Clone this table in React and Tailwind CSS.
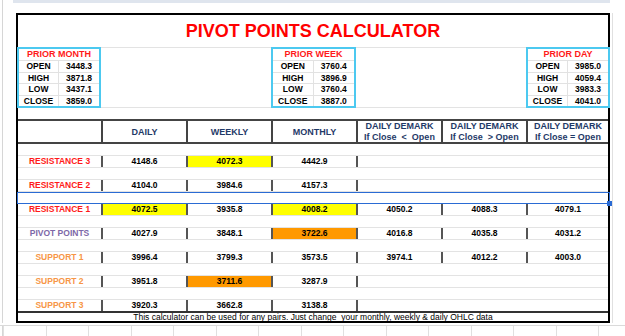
import React from "react";

const priorMonth = [["OPEN", "3448.3"], ["HIGH", "3871.8"], ["LOW", "3437.1"], ["CLOSE", "3859.0"]];
const priorWeek = [["OPEN", "3760.4"], ["HIGH", "3896.9"], ["LOW", "3760.4"], ["CLOSE", "3887.0"]];
const priorDay = [["OPEN", "3985.0"], ["HIGH", "4059.4"], ["LOW", "3983.3"], ["CLOSE", "4041.0"]];

const red = "text-[#ff1a1a]";
const purple = "text-[#7d68a8]";
const orange = "text-[#f79646]";
const yellowBg = "bg-[#ffff00]";
const orangeBg = "bg-[#ff9900]";

// null = empty spacer row, "sel" = the selected empty row
const rows = [
  null,
  { label: "RESISTANCE 3", tone: red, vals: [["4148.6", ""], ["4072.3", yellowBg], ["4442.9", ""]] },
  null,
  { label: "RESISTANCE 2", tone: red, vals: [["4104.0", ""], ["3984.6", ""], ["4157.3", ""]] },
  "sel",
  {
    label: "RESISTANCE 1",
    tone: red,
    vals: [["4072.5", yellowBg], ["3935.8", ""], ["4008.2", yellowBg]],
    demark: ["4050.2", "4088.3", "4079.1"],
  },
  null,
  {
    label: "PIVOT POINTS",
    tone: purple,
    vals: [["4027.9", ""], ["3848.1", ""], ["3722.6", orangeBg]],
    demark: ["4016.8", "4035.8", "4031.2"],
  },
  null,
  {
    label: "SUPPORT 1",
    tone: orange,
    vals: [["3996.4", ""], ["3799.3", ""], ["3573.5", ""]],
    demark: ["3974.1", "4012.2", "4003.0"],
  },
  null,
  { label: "SUPPORT 2", tone: orange, vals: [["3951.8", ""], ["3711.6", orangeBg], ["3287.9", ""]] },
  null,
  { label: "SUPPORT 3", tone: orange, vals: [["3920.3", ""], ["3662.8", ""], ["3138.8", ""]] },
];

const cols = "grid grid-cols-[83px_85px_85px_85px_85px_85px_82px]";

const PriorBox = ({ title, data, className }) => (
  <div className={`h-[61px] -mt-px border-2 border-[#4cc9f0] bg-white flex flex-col ${className}`}>
    <div className={`h-[11px] flex items-center justify-center text-[9px] font-bold leading-none ${red}`}>
      {title}
    </div>
    {data.map(([k, v]) => (
      <div key={k} className="flex-1 flex border-t border-[#e2e2e2] text-[8.5px] font-bold leading-none text-black">
        <div className="w-1/2 flex items-center justify-center border-r border-[#e2e2e2]">{k}</div>
        <div className="w-1/2 flex items-center justify-center">{v}</div>
      </div>
    ))}
  </div>
);

const HeadCell = ({ children }) => (
  <div className="border-l-2 border-[#444] flex flex-col items-center justify-center text-[9px] font-bold leading-[11px] text-[#1f3a68] whitespace-pre">
    {children}
  </div>
);

const DataRow = ({ row }) => {
  if (row === null) return <div className="h-[12px] border-b border-[#e3e3e3]" />;
  if (row === "sel")
    return (
      <div className="h-[12px] -ml-px -mr-[2px] border border-[#2a6bd4] relative">
        <div className="absolute -right-[3px] -bottom-[3px] w-[5px] h-[5px] bg-[#2a6bd4]" />
      </div>
    );
  return (
    <div className={`${cols} h-[12px] border-b border-[#e3e3e3] text-[8.5px] font-bold leading-none`}>
      <div className={`flex items-center justify-center ${row.tone}`}>{row.label}</div>
      {row.vals.map(([v, bg]) => (
        <div key={v} className={`flex items-center justify-center border-l-2 border-[#555] text-black ${bg}`}>
          {v}
        </div>
      ))}
      {row.demark ? (
        row.demark.map((v) => (
          <div key={v} className="flex items-center justify-center border-l-2 border-[#555] text-black">
            {v}
          </div>
        ))
      ) : (
        <div className="col-span-3 border-l-2 border-[#555]" />
      )}
    </div>
  );
};

export default function App() {
  return (
    <div className="w-[625px] h-[336px] bg-white overflow-hidden font-['Liberation_Sans',Arial,sans-serif]">
      {/* spreadsheet chrome on top */}
      <div className="h-[13px] flex">
        <div className="w-[3px] border-r border-[#d6d6d6]" />
        <div className="ml-[10px] w-[597px] h-[3px] bg-[#dfe5ee]" />
      </div>

      <div className="flex">
        <div className="w-[16px] flex">
          <div className="w-[3px] border-r border-[#d6d6d6]" />
        </div>

        {/* calculator frame */}
        <div className="w-[594px] border-2 border-black flex flex-col">
          <div className="h-[33px] border-b border-[#e3e3e3] flex items-center justify-center">
            <span className="text-[18px] font-bold text-[#ff0000] leading-none">PIVOT POINTS CALCULATOR</span>
          </div>

          <div className={`${cols} h-[60px] border-b border-[#e3e3e3]`}>
            <PriorBox title="PRIOR MONTH" data={priorMonth} className="col-start-1 -ml-px" />
            <PriorBox title="PRIOR WEEK" data={priorWeek} className="col-start-4" />
            <PriorBox title="PRIOR DAY" data={priorDay} className="col-start-7 -mr-[2px]" />
          </div>

          <div className="h-[11px]" />

          <div className={`${cols} h-[25px] border-y-2 border-[#444]`}>
            <div />
            <HeadCell>DAILY</HeadCell>
            <HeadCell>WEEKLY</HeadCell>
            <HeadCell>MONTHLY</HeadCell>
            <HeadCell>
              <span>DAILY DEMARK</span>
              <span>{"If Close  <  Open"}</span>
            </HeadCell>
            <HeadCell>
              <span>DAILY DEMARK</span>
              <span>{"If Close  > Open"}</span>
            </HeadCell>
            <HeadCell>
              <span>DAILY DEMARK</span>
              <span>If Close = Open</span>
            </HeadCell>
          </div>

          {rows.map((row, i) => (
            <DataRow key={i} row={row} />
          ))}

          <div className="h-[10px] -mt-px border-t-2 border-[#333] flex items-center justify-center text-[8.5px] leading-none text-black whitespace-pre">
            {"This calculator can be used for any pairs. Just change  your monthly, weekly & daily OHLC data"}
          </div>
        </div>

        <div className="w-[15px] flex">
          <div className="w-[3px] border-r border-[#e0e0e0]" />
        </div>
      </div>

      {/* spreadsheet grid below the frame */}
      <div className="mt-[2px] h-[12px] border-t border-[#dadada] flex">
        <div className="w-[16px] flex">
          <div className="w-[3px] border-r border-[#d6d6d6]" />
        </div>
        {Array.from({ length: 15 }).map((_, i) => (
          <div key={i} className="w-[42.5px] shrink-0 border-l border-[#e0e0e0]" />
        ))}
      </div>
    </div>
  );
}
